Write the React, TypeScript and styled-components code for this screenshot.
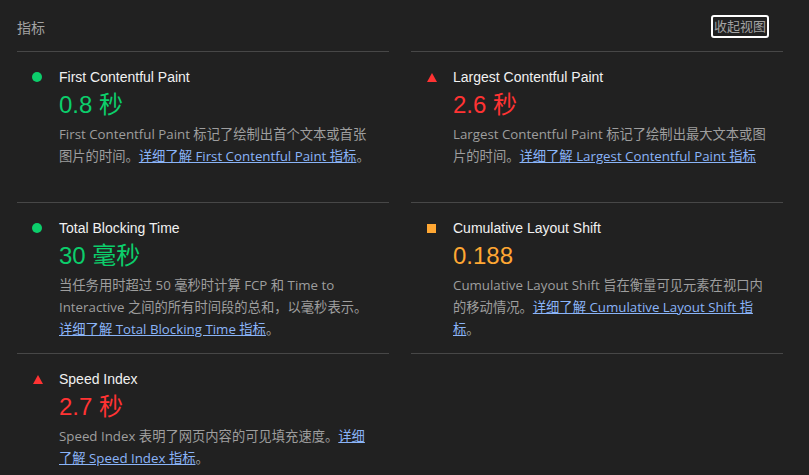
import styled, { createGlobalStyle } from "styled-components";

type Status = "pass" | "average" | "fail";

interface Metric {
  status: Status;
  title: string;
  value: string;
  description: string;
  link: string;
  tail?: string;
}

const colors: Record<Status, string> = {
  pass: "#0cce6b",
  average: "#ffa733",
  fail: "#ff3333",
};

const metrics: Metric[] = [
  {
    status: "pass",
    title: "First Contentful Paint",
    value: "0.8 秒",
    description: "First Contentful Paint 标记了绘制出首个文本或首张图片的时间。",
    link: "详细了解 First Contentful Paint 指标",
    tail: "。",
  },
  {
    status: "fail",
    title: "Largest Contentful Paint",
    value: "2.6 秒",
    description: "Largest Contentful Paint 标记了绘制出最大文本或图片的时间。",
    link: "详细了解 Largest Contentful Paint 指标",
  },
  {
    status: "pass",
    title: "Total Blocking Time",
    value: "30 毫秒",
    description:
      "当任务用时超过 50 毫秒时计算 FCP 和 Time to Interactive 之间的所有时间段的总和，以毫秒表示。",
    link: "详细了解 Total Blocking Time 指标",
    tail: "。",
  },
  {
    status: "average",
    title: "Cumulative Layout Shift",
    value: "0.188",
    description: "Cumulative Layout Shift 旨在衡量可见元素在视口内的移动情况。",
    link: "详细了解 Cumulative Layout Shift 指标",
    tail: "。",
  },
  {
    status: "fail",
    title: "Speed Index",
    value: "2.7 秒",
    description: "Speed Index 表明了网页内容的可见填充速度。",
    link: "详细了解 Speed Index 指标",
    tail: "。",
  },
];

const GlobalStyle = createGlobalStyle`
  html, body {
    margin: 0;
    padding: 0;
    background: #212121;
    overflow: hidden;
  }
  body {
    font-family: "Liberation Sans", "Noto Sans CJK SC", sans-serif;
  }
`;

const Wrapper = styled.div`
  padding: 0 26px 0 17px;
  background: #212121;
  min-height: 475px;
`;

const Header = styled.div`
  display: flex;
  align-items: center;
  justify-content: space-between;
  padding: 15px 14px 13px 0;
`;

const HeaderTitle = styled.span`
  font-size: 14px;
  color: #a3a3a3;
`;

const ToggleButton = styled.button`
  font-family: inherit;
  font-size: 13px;
  line-height: 19px;
  color: #a3a3a3;
  background: transparent;
  border: 2px solid #ffffff;
  border-radius: 3px;
  padding: 0 1px;
  margin: 0;
  cursor: pointer;
`;

const Grid = styled.div`
  display: grid;
  grid-template-columns: 1fr 1fr;
  column-gap: 22px;
`;

const MetricBox = styled.div`
  display: grid;
  grid-template-columns: 42px 1fr;
  align-content: start;
  min-height: 124px;
  padding: 13px 13px 13px 0;
  border-bottom: 1px solid #474747;

  &:nth-child(-n + 2) {
    border-top: 1px solid #474747;
  }
`;

const IconCell = styled.div`
  height: 24px;
  display: flex;
  align-items: center;
  padding-left: 15px;
`;

const Circle = styled.span`
  width: 10px;
  height: 10px;
  border-radius: 50%;
  background: ${colors.pass};
`;

const Square = styled.span`
  width: 9px;
  height: 9px;
  margin-left: 1px;
  background: ${colors.average};
`;

const Triangle = styled.span`
  width: 0;
  height: 0;
  margin-left: 1px;
  border-left: 5px solid transparent;
  border-right: 5px solid transparent;
  border-bottom: 9px solid ${colors.fail};
`;

const Body = styled.div`
  display: flex;
  flex-direction: column;
`;

const Title = styled.span`
  font-size: 14px;
  line-height: 24px;
  color: #f1f1f1;
`;

const Value = styled.span<{ $status: Status }>`
  font-size: 24px;
  line-height: 32px;
  color: ${(p) => colors[p.$status]};
`;

const Description = styled.p`
  margin: 2px 0 0;
  font-family: "Open Sans", "Noto Sans CJK SC", sans-serif;
  font-size: 13.3px;
  line-height: 22px;
  color: #9e9e9e;
`;

const LearnMore = styled.a`
  color: #8ab4f8;
  text-decoration: underline;
`;

function StatusIcon({ status }: { status: Status }) {
  if (status === "pass") return <Circle />;
  if (status === "average") return <Square />;
  return <Triangle />;
}

export default function App() {
  const renderMetric = (metric: Metric) => (
    <MetricBox key={metric.title}>
      <IconCell>
        <StatusIcon status={metric.status} />
      </IconCell>
      <Body>
        <Title>{metric.title}</Title>
        <Value $status={metric.status}>{metric.value}</Value>
        <Description>
          {metric.description}
          <LearnMore href="#">{metric.link}</LearnMore>
          {metric.tail}
        </Description>
      </Body>
    </MetricBox>
  );
  return (
    <Wrapper>
      <GlobalStyle />
      <Header>
        <HeaderTitle>指标</HeaderTitle>
        <ToggleButton>收起视图</ToggleButton>
      </Header>
      <Grid>{metrics.map(renderMetric)}</Grid>
    </Wrapper>
  );
}
